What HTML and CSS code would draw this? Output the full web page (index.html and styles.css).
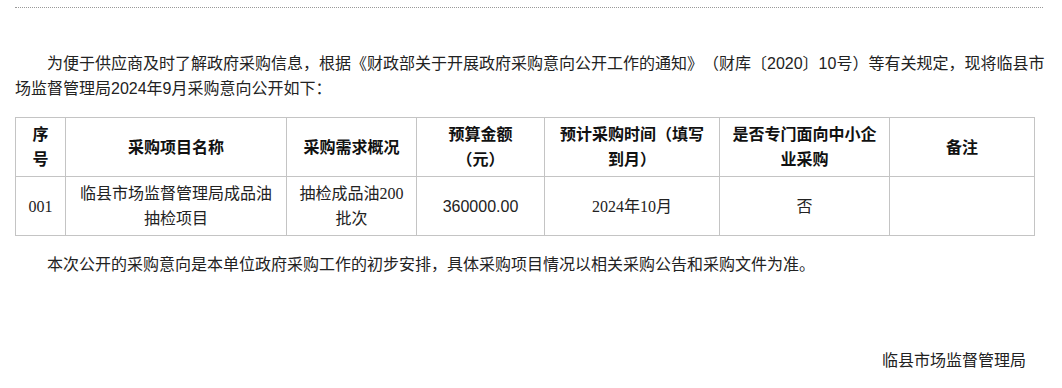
FILE: index.html
```html
<!DOCTYPE html>
<html lang="zh-CN">
<head>
<meta charset="utf-8">
<title>采购意向公开</title>
<link rel="stylesheet" href="styles.css">
</head>
<body>
<div class="page">
  <div class="rule"></div>
  <div class="article">
    <p class="para">为便于供应商及时了解政府采购信息，根据《财政部关于开展政府采购意向公开工作的通知》（财库〔2020〕10号）等有关规定，现将临县市场监督管理局2024年9月采购意向公开如下：</p>
    <table class="grid">
      <colgroup>
        <col class="c1"><col class="c2"><col class="c3"><col class="c4"><col class="c5"><col class="c6"><col class="c7">
      </colgroup>
      <thead>
        <tr>
          <th>序号</th>
          <th>采购项目名称</th>
          <th>采购需求概况</th>
          <th>预算金额（元）</th>
          <th>预计采购时间（填写到月）</th>
          <th>是否专门面向中小企业采购</th>
          <th>备注</th>
        </tr>
      </thead>
      <tbody>
        <tr>
          <td class="serif">001</td>
          <td>临县市场监督管理局成品油抽检项目</td>
          <td>抽检成品油<span class="serif">200</span>批次</td>
          <td>360000.00</td>
          <td class="serif">2024年10月</td>
          <td>否</td>
          <td></td>
        </tr>
      </tbody>
    </table>
    <p class="para">本次公开的采购意向是本单位政府采购工作的初步安排，具体采购项目情况以相关采购公告和采购文件为准。</p>
    <p class="sign">临县市场监督管理局</p>
  </div>
</div>
</body>
</html>
```
FILE: styles.css
```css
html, body {
  margin: 0;
  padding: 0;
  background: #fff;
}
body {
  font-family: "Liberation Sans", "Noto Sans CJK SC", sans-serif;
  font-size: 16px;
  line-height: 25px;
  color: #222;
  text-spacing-trim: space-all;
}
.page {
  width: 1028px;
  margin-left: 15px;
  padding-top: 7px;
}
.rule {
  border-top: 1px dotted #999;
}
.article {
  padding-top: 43px;
}
.para {
  margin: 0 -8px 16px 0;
  text-indent: 32px;
}
.grid {
  width: 1019px;
  border-collapse: collapse;
  table-layout: fixed;
  margin-bottom: 16px;
}
.c1 { width: 50px; }
.c2 { width: 221px; }
.c3 { width: 130px; }
.c4 { width: 128px; }
.c5 { width: 175px; }
.c6 { width: 170px; }
.c7 { width: 145px; }
.grid th, .grid td {
  border: 1px solid #c4c4c4;
  padding: 4px 10px;
  text-align: center;
  vertical-align: middle;
  height: 50px;
  line-height: 25px;
}
.grid th {
  font-weight: bold;
  color: #111;
}
.serif {
  font-family: "Liberation Serif", "Noto Sans CJK SC", serif;
}
.sign {
  margin: 71px 0 0 0;
  text-align: right;
  padding-right: 17px;
}
```
